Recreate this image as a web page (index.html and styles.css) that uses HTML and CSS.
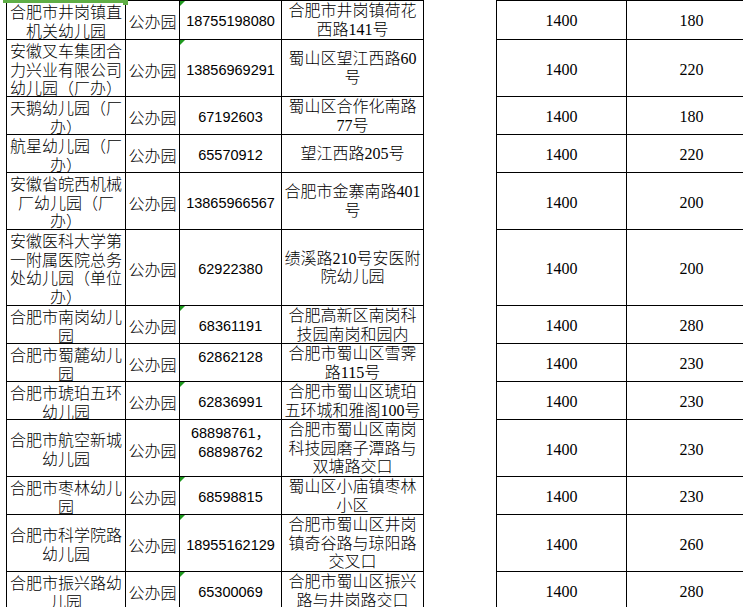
FILE: index.html
```html
<!DOCTYPE html>
<html lang="zh-CN">
<head>
<meta charset="utf-8">
<title>幼儿园收费表</title>
<link rel="stylesheet" href="styles.css">
</head>
<body>
<div class="sheet">
  <div class="sel-bar"></div>
  <div class="sel-handle"></div>

  <div class="row r39">
    <div class="c name">合肥市井岗镇直机关幼儿园</div>
    <div class="c type">公办园</div>
    <div class="c phone tri">18755198080</div>
    <div class="c addr">合肥市井岗镇荷花西路141号</div>
    <div class="blank"></div>
    <div class="c num">1400</div>
    <div class="c num">180</div>
  </div>

  <div class="row r57">
    <div class="c name">安徽叉车集团合力兴业有限公司幼儿园（厂办）</div>
    <div class="c type">公办园</div>
    <div class="c phone tri">13856969291</div>
    <div class="c addr">蜀山区望江西路60号</div>
    <div class="blank"></div>
    <div class="c num">1400</div>
    <div class="c num">220</div>
  </div>

  <div class="row r38">
    <div class="c name">天鹅幼儿园（厂办）</div>
    <div class="c type">公办园</div>
    <div class="c phone">67192603</div>
    <div class="c addr">蜀山区合作化南路77号</div>
    <div class="blank"></div>
    <div class="c num">1400</div>
    <div class="c num">180</div>
  </div>

  <div class="row r38">
    <div class="c name">航星幼儿园（厂办）</div>
    <div class="c type">公办园</div>
    <div class="c phone">65570912</div>
    <div class="c addr">望江西路205号</div>
    <div class="blank"></div>
    <div class="c num">1400</div>
    <div class="c num">220</div>
  </div>

  <div class="row r57">
    <div class="c name">安徽省皖西机械厂幼儿园（厂办）</div>
    <div class="c type">公办园</div>
    <div class="c phone">13865966567</div>
    <div class="c addr">合肥市金寨南路401号</div>
    <div class="blank"></div>
    <div class="c num">1400</div>
    <div class="c num">200</div>
  </div>

  <div class="row r76">
    <div class="c name">安徽医科大学第一附属医院总务处幼儿园（单位办）</div>
    <div class="c type">公办园</div>
    <div class="c phone">62922380</div>
    <div class="c addr">绩溪路210号安医附院幼儿园</div>
    <div class="blank"></div>
    <div class="c num">1400</div>
    <div class="c num">200</div>
  </div>

  <div class="row r38">
    <div class="c name">合肥市南岗幼儿园</div>
    <div class="c type">公办园</div>
    <div class="c phone tri">68361191</div>
    <div class="c addr">合肥高新区南岗科技园南岗和园内</div>
    <div class="blank"></div>
    <div class="c num">1400</div>
    <div class="c num">280</div>
  </div>

  <div class="row r38">
    <div class="c name">合肥市蜀麓幼儿园</div>
    <div class="c type">公办园</div>
    <div class="c phone top">62862128</div>
    <div class="c addr">合肥市蜀山区雪霁路115号</div>
    <div class="blank"></div>
    <div class="c num">1400</div>
    <div class="c num">230</div>
  </div>

  <div class="row r38">
    <div class="c name">合肥市琥珀五环幼儿园</div>
    <div class="c type">公办园</div>
    <div class="c phone tri">62836991</div>
    <div class="c addr">合肥市蜀山区琥珀五环城和雅阁100号</div>
    <div class="blank"></div>
    <div class="c num">1400</div>
    <div class="c num">230</div>
  </div>

  <div class="row r57">
    <div class="c name">合肥市航空新城幼儿园</div>
    <div class="c type">公办园</div>
    <div class="c phone top">68898761，68898762</div>
    <div class="c addr">合肥市蜀山区南岗科技园磨子潭路与双塘路交口</div>
    <div class="blank"></div>
    <div class="c num">1400</div>
    <div class="c num">230</div>
  </div>

  <div class="row r38">
    <div class="c name">合肥市枣林幼儿园</div>
    <div class="c type">公办园</div>
    <div class="c phone tri">68598815</div>
    <div class="c addr">蜀山区小庙镇枣林小区</div>
    <div class="blank"></div>
    <div class="c num">1400</div>
    <div class="c num">230</div>
  </div>

  <div class="row r57">
    <div class="c name">合肥市科学院路幼儿园</div>
    <div class="c type">公办园</div>
    <div class="c phone tri">18955162129</div>
    <div class="c addr">合肥市蜀山区井岗镇奇谷路与琼阳路交叉口</div>
    <div class="blank"></div>
    <div class="c num">1400</div>
    <div class="c num">260</div>
  </div>

  <div class="row r38">
    <div class="c name">合肥市振兴路幼儿园</div>
    <div class="c type">公办园</div>
    <div class="c phone tri">65300069</div>
    <div class="c addr">合肥市蜀山区振兴路与井岗路交口</div>
    <div class="blank"></div>
    <div class="c num">1400</div>
    <div class="c num">280</div>
  </div>
</div>
</body>
</html>
```

FILE: styles.css
```css
html, body {
  margin: 0;
  padding: 0;
  background: #fff;
  overflow: hidden;
  height: 607px;
}

.sheet {
  position: relative;
  margin-left: 6px;
  width: 760px;
  color: #000;
  font-family: "Liberation Serif", "Noto Sans CJK SC", serif;
  font-size: 16px;
}

.row {
  display: grid;
  grid-template-columns: 119px 54px 102px 143px 72px 130px 130px;
}

.r38 { height: 38px; }
.r39 { height: 39px; }
.r57 { height: 57px; }
.r76 { height: 76px; }

.c {
  box-sizing: border-box;
  border-top: 1px solid #000;
  border-left: 1px solid #000;
  display: flex;
  align-items: center;
  justify-content: center;
  text-align: center;
  line-height: 18.5px;
  padding: 1px 2px 0;
  position: relative;
  min-width: 0;
}

.name, .type {
  font-family: "Noto Sans CJK SC", sans-serif;
  font-weight: 300;
}

.type {
  padding-top: 3px;
}

.addr {
  border-right: 1px solid #000;
  padding: 1px 1px 0;
  font-family: "Liberation Serif", "Noto Sans CJK SC", serif;
  font-weight: 300;
}

.phone {
  font-family: "Liberation Sans", "Noto Sans CJK SC", sans-serif;
  font-size: 14.5px;
  padding: 3px 4px 0;
}

.phone.top {
  align-items: flex-start;
  padding-top: 4px;
}

.num {
  font-family: "Liberation Serif", serif;
  font-size: 16px;
  padding-top: 3px;
}

.blank {
  min-width: 0;
}

.tri::before {
  content: "";
  position: absolute;
  top: 0;
  left: 0;
  width: 0;
  height: 0;
  border-top: 5px solid #1f9a1f;
  border-right: 5px solid transparent;
}

.sel-bar {
  position: absolute;
  top: 0;
  left: -3px;
  width: 121px;
  height: 3px;
  background: #5fae46;
  z-index: 2;
}

.sel-handle {
  position: absolute;
  top: 0;
  left: 117px;
  width: 5px;
  height: 5px;
  background: #5fae46;
  z-index: 3;
}
```
